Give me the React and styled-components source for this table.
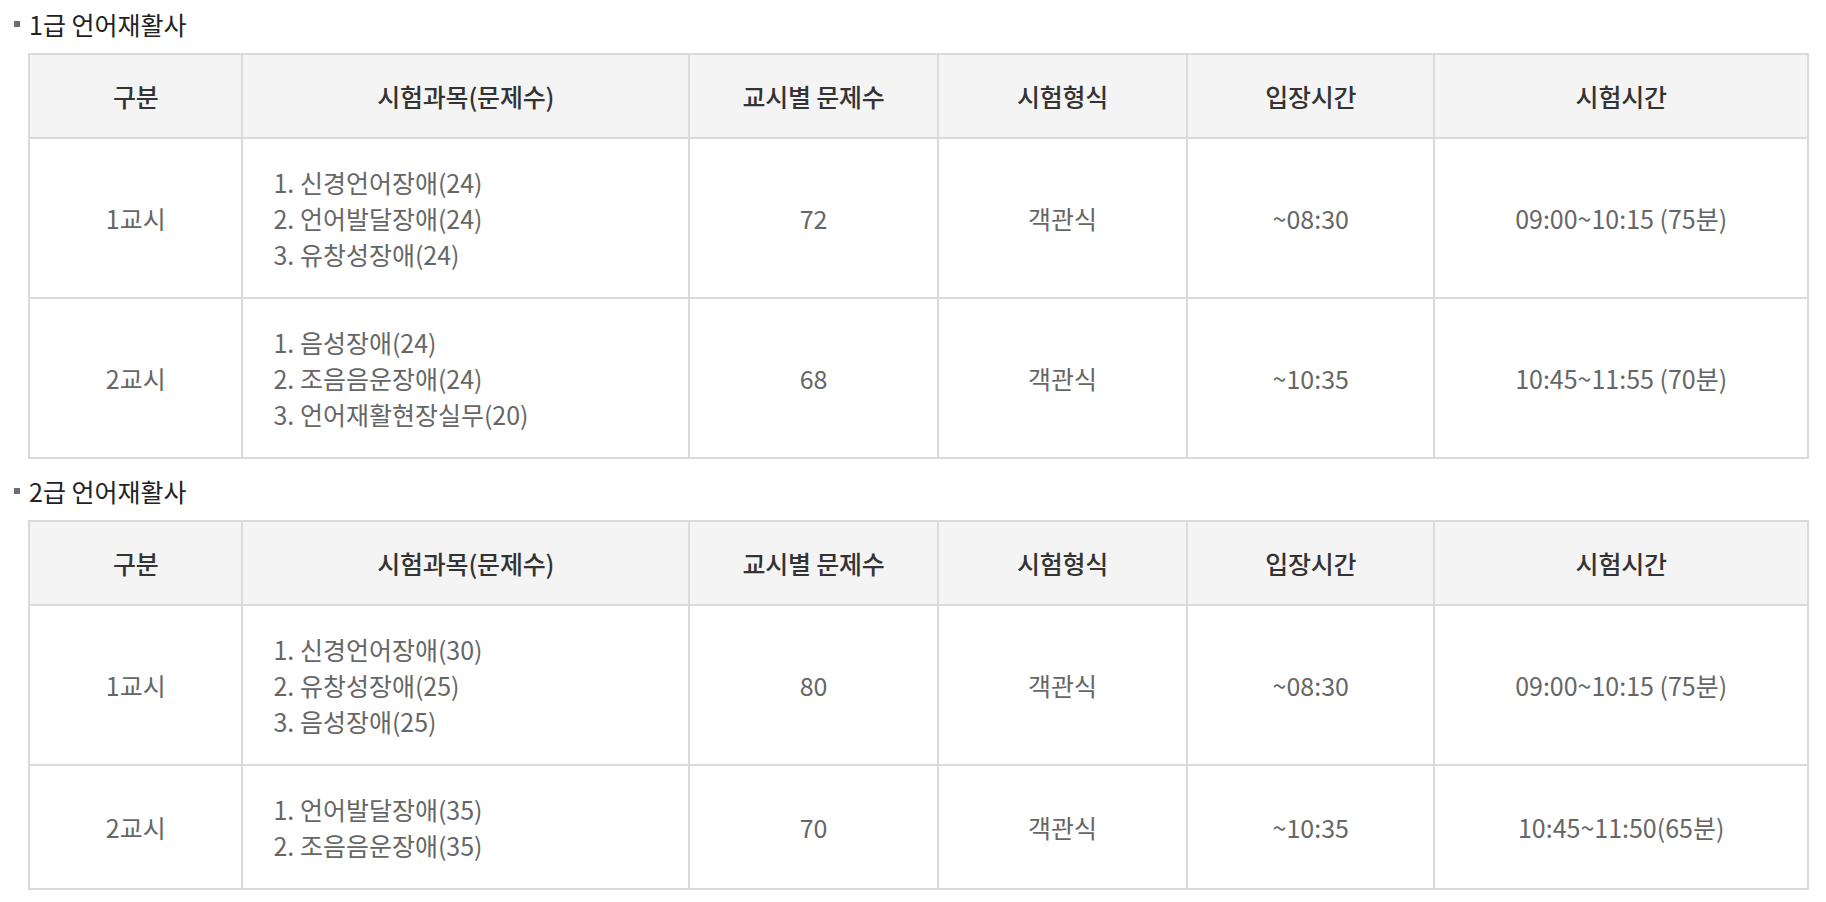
import React from "react";
import styled, { createGlobalStyle } from "styled-components";

const GlobalStyle = createGlobalStyle`
  html, body {
    margin: 0;
    padding: 0;
    background: #ffffff;
  }
  body {
    font-family: "Noto Sans CJK KR", "Noto Sans", sans-serif;
  }
`;

const sections = [
  {
    title: "1급 언어재활사",
    rows: [
      {
        period: "1교시",
        subjects: ["1. 신경언어장애(24)", "2. 언어발달장애(24)", "3. 유창성장애(24)"],
        count: "72",
        type: "객관식",
        entry: "~08:30",
        time: "09:00~10:15 (75분)",
      },
      {
        period: "2교시",
        subjects: ["1. 음성장애(24)", "2. 조음음운장애(24)", "3. 언어재활현장실무(20)"],
        count: "68",
        type: "객관식",
        entry: "~10:35",
        time: "10:45~11:55 (70분)",
      },
    ],
  },
  {
    title: "2급 언어재활사",
    rows: [
      {
        period: "1교시",
        subjects: ["1. 신경언어장애(30)", "2. 유창성장애(25)", "3. 음성장애(25)"],
        count: "80",
        type: "객관식",
        entry: "~08:30",
        time: "09:00~10:15 (75분)",
      },
      {
        period: "2교시",
        subjects: ["1. 언어발달장애(35)", "2. 조음음운장애(35)"],
        count: "70",
        type: "객관식",
        entry: "~10:35",
        time: "10:45~11:50(65분)",
      },
    ],
  },
];

const headers = ["구분", "시험과목(문제수)", "교시별 문제수", "시험형식", "입장시간", "시험시간"];
const widths = ["12%", "25.1%", "14%", "14%", "13.9%", "21%"];

const Page = styled.div`
  padding: 6px 17px 0 14px;
`;

const Section = styled.section`
  & + & {
    margin-top: 14px;
  }
`;

const Title = styled.h3`
  display: flex;
  align-items: center;
  gap: 9px;
  margin: 0 0 11px;
  font-size: 25px;
  line-height: 36px;
  font-weight: 400;
  color: #222;
  letter-spacing: 0;

  &:before {
    content: "";
    width: 6px;
    height: 6px;
    background: #6b6f75;
    flex-shrink: 0;
  }
`;

const Table = styled.table`
  margin-left: 14px;
  width: calc(100% - 14px);
  border-collapse: collapse;
  table-layout: fixed;
  border: 2px solid #dadada;
`;

const Th = styled.th`
  background: #f4f4f4;
  border: 2px solid #dadada;
  padding: 23px 10px 23px;
  font-size: 25px;
  line-height: 36px;
  font-weight: 500;
  color: #333;
  letter-spacing: -0.2px;
  text-align: center;
`;

const Td = styled.td`
  border: 2px solid #dadada;
  padding: 25px ${(p) => (p.$left ? "30px" : "10px")} 25px;
  font-size: 25px;
  line-height: 36px;
  font-weight: 400;
  color: #666;
  letter-spacing: 0;
  text-align: ${(p) => (p.$left ? "left" : "center")};
  vertical-align: middle;
`;

const Line = styled.div`
  white-space: nowrap;
`;

const ExamTable = ({ rows }) => (
  <Table>
    <colgroup>
      {widths.map((w, i) => (
        <col key={i} style={{ width: w }} />
      ))}
    </colgroup>
    <thead>
      <tr>
        {headers.map((h) => (
          <Th key={h}>{h}</Th>
        ))}
      </tr>
    </thead>
    <tbody>
      {rows.map((r) => (
        <tr key={r.period}>
          <Td>{r.period}</Td>
          <Td $left>
            {r.subjects.map((s) => (
              <Line key={s}>{s}</Line>
            ))}
          </Td>
          <Td>{r.count}</Td>
          <Td>{r.type}</Td>
          <Td>{r.entry}</Td>
          <Td>{r.time}</Td>
        </tr>
      ))}
    </tbody>
  </Table>
);

export default function App() {
  return (
    <>
      <GlobalStyle />
      <Page>
        {sections.map((s) => (
          <Section key={s.title}>
            <Title>{s.title}</Title>
            <ExamTable rows={s.rows} />
          </Section>
        ))}
      </Page>
    </>
  );
}
